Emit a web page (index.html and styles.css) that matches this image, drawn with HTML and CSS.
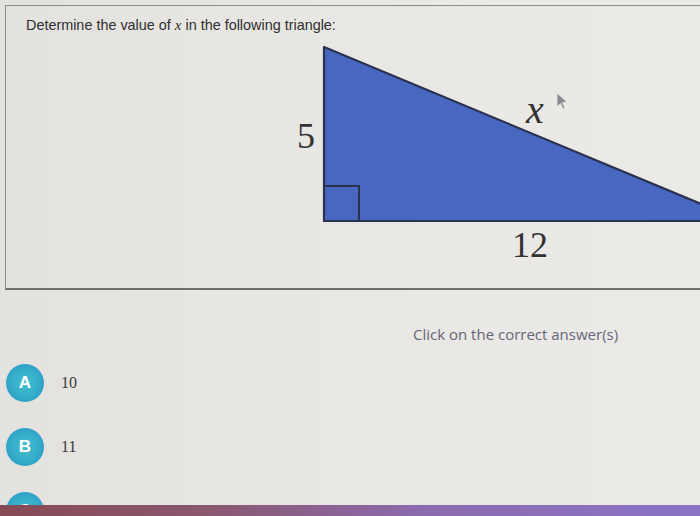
FILE: index.html
```html
<!DOCTYPE html>
<html>
<head>
<meta charset="utf-8">
<link rel="stylesheet" href="styles.css">
</head>
<body>
<div class="screen">
  <div class="main">
    <section class="qbox">
      <p class="qtext">Determine the value of <span class="var">x</span> in the following triangle:</p>
      <svg class="figure" width="470" height="230" viewBox="0 0 470 230">
        <polygon points="44,7 462,181 44,181" fill="#4767c0" stroke="#2a3250" stroke-width="2.2" stroke-linejoin="round"/>
        <rect x="44" y="146" width="35" height="35" fill="none" stroke="#2a3250" stroke-width="2"/>
        <text x="26" y="108" class="lbl" text-anchor="middle">5</text>
        <text x="255" y="83" class="lbl ital" text-anchor="middle">x</text>
        <text x="250" y="217" class="lbl" text-anchor="middle">12</text>
        <path d="M277 53 L277 67 L280.5 63.5 L283 69 L285 68 L282.5 62.5 L287 62 Z" fill="#8a8a90" stroke="#e8e8e8" stroke-width="0.8"/>
      </svg>
    </section>
    <p class="instr">Click on the correct answer(s)</p>
    <ul class="answers">
      <li class="ans"><span class="badge">A</span><span class="val">10</span></li>
      <li class="ans"><span class="badge">B</span><span class="val">11</span></li>
      <li class="ans"><span class="badge">C</span><span class="val">12</span></li>
    </ul>
  </div>
  <div class="bar"></div>
</div>
</body>
</html>
```
FILE: styles.css
```css
html, body {
  margin: 0;
  padding: 0;
  width: 700px;
  height: 516px;
  overflow: hidden;
}
body {
  background: #e8e6e2;
}
.screen {
  width: 700px;
  height: 516px;
  display: flex;
  flex-direction: column;
  background: linear-gradient(90deg, #e3e2de 0%, #e8e7e3 45%, #eceae7 100%);
}
.main {
  height: 505px;
  overflow: hidden;
}
.qbox {
  margin: 5px 0 0 5px;
  width: 760px;
  height: 285px;
  box-sizing: border-box;
  border: 1px solid #8c8c8c;
  border-bottom: 2px solid #6e6e6e;
  border-right: none;
  display: flex;
  flex-direction: column;
}
.qtext {
  margin: 11px 0 0 20px;
  font-family: "Liberation Sans", Arial, sans-serif;
  font-size: 14.4px;
  line-height: 16px;
  color: #2f2f2f;
}
.var {
  font-family: "Liberation Serif", serif;
  font-style: italic;
  font-size: 15px;
}
.figure {
  display: block;
  margin: 7px 0 0 274px;
  overflow: visible;
}
.lbl {
  font-family: "Liberation Serif", "DejaVu Serif", serif;
  font-size: 36px;
  fill: #333333;
}
.ital {
  font-style: italic;
  font-size: 40px;
}
.instr {
  margin: 35px 0 0 413px;
  font-family: "Open Sans", "Noto Sans", sans-serif;
  font-size: 15px;
  line-height: 18px;
  color: #66667a;
}
.answers {
  list-style: none;
  margin: 21px 0 0 0;
  padding: 0;
  display: flex;
  flex-direction: column;
  gap: 26px;
}
.ans {
  display: flex;
  align-items: center;
  gap: 17px;
  padding-left: 6px;
}
.badge {
  width: 38px;
  height: 38px;
  border-radius: 50%;
  background: radial-gradient(circle at 50% 50%, #45bfcf 0%, #33abc9 55%, #2a8ec4 100%);
  color: #ffffff;
  font-family: "Liberation Sans", Arial, sans-serif;
  font-weight: bold;
  font-size: 17px;
  display: flex;
  align-items: center;
  justify-content: center;
}
.val {
  font-family: "Liberation Serif", serif;
  font-size: 16px;
  color: #3a3a3a;
}
.bar {
  height: 11px;
  background: linear-gradient(90deg, #874a55 0%, #8a5870 30%, #8c6aae 60%, #8a74c6 100%);
}
```
